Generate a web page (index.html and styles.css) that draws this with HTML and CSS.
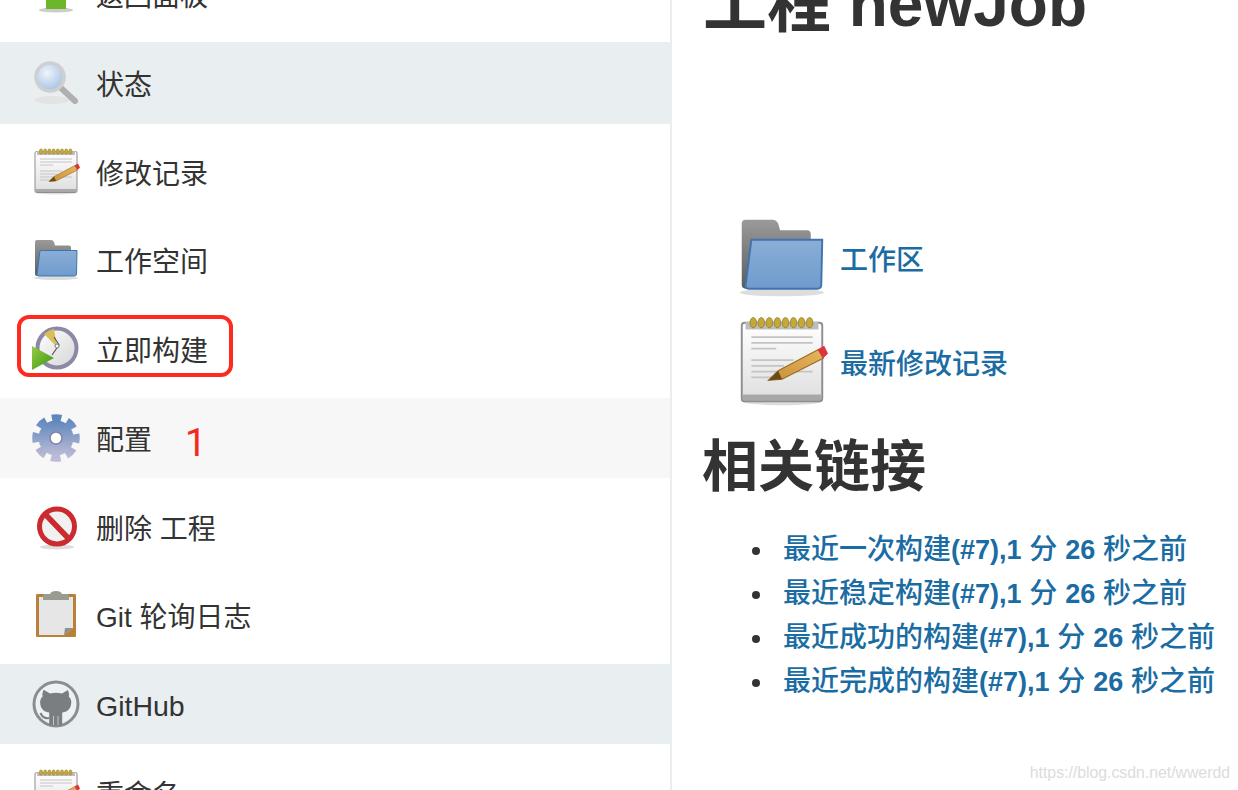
FILE: index.html
```html
<!DOCTYPE html>
<html lang="zh-CN">

<head>
  <meta charset="UTF-8">
  <title>工程 newJob</title>
  <link rel="stylesheet" href="styles.css">
</head>

<body>
  <svg class="defs" width="0" height="0">
    <defs>
      <linearGradient id="paper" x1="0" y1="0" x2="0" y2="1">
        <stop offset="0" stop-color="#ffffff" />
        <stop offset="1" stop-color="#dedede" />
      </linearGradient>
      <linearGradient id="pencil" x1="0" y1="1" x2="1" y2="0">
        <stop offset="0" stop-color="#c9913a" />
        <stop offset="1" stop-color="#e6b560" />
      </linearGradient>
      <linearGradient id="folderBack" x1="0" y1="0" x2="0" y2="1">
        <stop offset="0" stop-color="#9a9a9a" />
        <stop offset="1" stop-color="#5c5c5c" />
      </linearGradient>
      <linearGradient id="folderFront" x1="0" y1="0" x2="0" y2="1">
        <stop offset="0" stop-color="#8aaed6" />
        <stop offset="1" stop-color="#6f9bcd" />
      </linearGradient>
      <radialGradient id="lens" cx="0.4" cy="0.35" r="0.7">
        <stop offset="0" stop-color="#eef4fb" />
        <stop offset="1" stop-color="#a3c0e4" />
      </radialGradient>
      <linearGradient id="gear" x1="0" y1="0" x2="0" y2="1">
        <stop offset="0" stop-color="#5f86bd" />
        <stop offset="1" stop-color="#bcbcd6" />
      </linearGradient>
      <linearGradient id="play" x1="0" y1="0" x2="1" y2="1">
        <stop offset="0" stop-color="#97cc45" />
        <stop offset="1" stop-color="#3a9610" />
      </linearGradient>
      <linearGradient id="face" x1="0" y1="0" x2="1" y2="1">
        <stop offset="0" stop-color="#ffffff" />
        <stop offset="1" stop-color="#d5d5d5" />
      </linearGradient>

      <symbol id="i-up" viewBox="0 0 48 48">
        <ellipse cx="24" cy="40" rx="17" ry="2.5" fill="#ccc" />
        <path d="M24 2 44 22H34V39H14V22H4Z" fill="#6db52b" />
      </symbol>

      <symbol id="i-search" viewBox="0 0 48 48">
        <ellipse cx="20" cy="41" rx="17" ry="4" fill="#e2e4e4" />
        <path d="M29 29 43 42" stroke="#b0b0b0" stroke-width="6" stroke-linecap="round" />
        <circle cx="18" cy="18" r="14" fill="url(#lens)" stroke="#cfcfcf" stroke-width="3.5" />
      </symbol>

      <symbol id="i-notepad" viewBox="0 0 48 48">
        <ellipse cx="24" cy="45" rx="20" ry="1.5" fill="#ddd" />
        <rect x="3" y="3.500" width="42" height="41" rx="1.5" fill="url(#paper)" stroke="#8e8e8e" />
        <rect x="3.500" y="41" width="41" height="3" fill="#a8a8a8" />
        <rect x="5" y="3" width="38" height="4" fill="#bdbdbd" />
        <g fill="#c6a83a" stroke="#8d7a22" stroke-width=".4">
          <ellipse cx="9" cy="3.500" rx="1.7" ry="2.7" />
          <ellipse cx="13.200" cy="3.500" rx="1.7" ry="2.7" />
          <ellipse cx="17.400" cy="3.500" rx="1.7" ry="2.7" />
          <ellipse cx="21.600" cy="3.500" rx="1.7" ry="2.7" />
          <ellipse cx="25.800" cy="3.500" rx="1.7" ry="2.7" />
          <ellipse cx="30" cy="3.500" rx="1.7" ry="2.7" />
          <ellipse cx="34.200" cy="3.500" rx="1.7" ry="2.7" />
          <ellipse cx="38.400" cy="3.500" rx="1.7" ry="2.7" />
        </g>
        <path d="M8 11H40M8 14H40M8 17H21M8 23H30M8 26H25M8 29H40M8 32H20" stroke="#c4c4c4" stroke-width="1" />
        <path d="M17 33.500 22 28.500 43 17.500 45.500 22 24 33Z" fill="url(#pencil)" stroke="#9a6c22" stroke-width=".6" />
        <path d="M17 33.500 22 28.500 24 33Z" fill="#6a4a1a" />
        <path d="M42.500 17.500 46 15.500 48 19.500 45.500 22Z" fill="#e0323c" />
      </symbol>

      <symbol id="i-folder" viewBox="0 0 48 48">
        <ellipse cx="24" cy="42" rx="22" ry="2" fill="#ddd" />
        <path d="M3 6Q3 4 5 4H19Q21 4 22 6L23 9.500H37Q39 9.500 39 11.500V40H5Q3 40 3 38Z" fill="url(#folderBack)" />
        <path d="M8 14.500H45L44.500 38Q44.500 40 42.500 40H6.500Q5 40 5 38.500Z" fill="url(#folderFront)" stroke="#3f74b0" />
      </symbol>

      <symbol id="i-clock" viewBox="0 0 48 48">
        <circle cx="25" cy="23" r="19.500" fill="url(#face)" stroke="#8a8aa6" stroke-width="4" />
        <path d="M25 22 12 9Q17 5 22 4Z" fill="#d9bf58" />
        <path d="M22 12 27 20 20 30" fill="none" stroke="#555" stroke-width="1.200" />
        <circle cx="25" cy="21" r="2" fill="#fff" stroke="#777" />
        <path d="M0 21 22 33 0 45Z" fill="url(#play)" />
      </symbol>

      <symbol id="i-gear" viewBox="0 0 48 48">
        <circle cx="24" cy="24" r="20" fill="none" stroke="url(#gear)" stroke-width="7.500" stroke-dasharray="9.500 6.200" stroke-dashoffset="4.750" />
        <circle cx="24" cy="24" r="17.500" fill="url(#gear)" />
        <circle cx="24" cy="24" r="6" fill="#fff" stroke="#7f84a6" stroke-width="1.500" />
      </symbol>

      <symbol id="i-delete" viewBox="0 0 48 48">
        <ellipse cx="25" cy="44" rx="17" ry="2.500" fill="#ddd" />
        <circle cx="25" cy="23.500" r="17.500" fill="#f1f1f1" stroke="#cb2a2f" stroke-width="5" />
        <path d="M13 11 37 36" stroke="#cb2a2f" stroke-width="5.500" />
      </symbol>

      <symbol id="i-clipboard" viewBox="0 0 48 48">
        <rect x="4" y="3" width="40" height="43" rx="1" fill="#b9803a" />
        <path d="M7 6H41V37L32 44H7Z" fill="#e6e6e6" />
        <path d="M32 44 41 37H33Z" fill="#8f8f8f" />
        <path d="M11 9V5Q11 3 13 3H18Q19 0 24 0T30 3H35Q37 3 37 5V9Z" fill="#9a9b91" />
      </symbol>

      <symbol id="i-github" viewBox="0 0 48 48">
        <circle cx="24" cy="24" r="22" fill="#eef1f3" stroke="#8a8e91" stroke-width="3" />
        <path d="M12 10 18 13.500Q24 12 30 13.500L36 10Q37.500 14 36.800 16.500 39.800 19.500 39.200 23.500C38.600 30 34.200 32 30.200 32.500V45.500H17.200V32.500C13.200 32 8.800 30 8.200 23.500Q7.600 19.500 10.600 16.500 9.900 14 11.400 10Z" fill="#7b7e81" />
        <path d="M17 38Q11 39 8.500 33" fill="none" stroke="#7b7e81" stroke-width="2" />
        <path d="M21.500 36V45M26 36V45" stroke="#c4c7c9" stroke-width="1" />
      </symbol>
    </defs>
  </svg>

  <div class="page">
    <div class="sidebar">
      <div class="task-row">
        <svg class="task-icon"><use href="#i-up" /></svg>
        <span>返回面板</span>
      </div>
      <div class="task-row task-row-status">
        <svg class="task-icon"><use href="#i-search" /></svg>
        <span>状态</span>
      </div>
      <div class="task-row">
        <svg class="task-icon"><use href="#i-notepad" /></svg>
        <span>修改记录</span>
      </div>
      <div class="task-row">
        <svg class="task-icon"><use href="#i-folder" /></svg>
        <span>工作空间</span>
      </div>
      <div class="task-row">
        <svg class="task-icon"><use href="#i-clock" /></svg>
        <span>立即构建</span>
        <div class="red-box"></div>
      </div>
      <div class="task-row task-row-hover">
        <svg class="task-icon"><use href="#i-gear" /></svg>
        <span>配置</span>
        <span class="mark">1</span>
      </div>
      <div class="task-row">
        <svg class="task-icon"><use href="#i-delete" /></svg>
        <span>删除 工程</span>
      </div>
      <div class="task-row">
        <svg class="task-icon"><use href="#i-clipboard" /></svg>
        <span>Git 轮询日志</span>
      </div>
      <div class="task-row task-row-active">
        <svg class="task-icon"><use href="#i-github" /></svg>
        <span class="task-latin">GitHub</span>
      </div>
      <div class="task-row">
        <svg class="task-icon"><use href="#i-notepad" /></svg>
        <span>重命名</span>
      </div>
    </div>

    <div class="main">
      <h1>工程 newJob</h1>

      <div class="perma-links">
        <div class="perma-row">
          <svg class="perma-icon"><use href="#i-folder" /></svg>
          <a href="#">工作区</a>
        </div>
        <div class="perma-row">
          <svg class="perma-icon"><use href="#i-notepad" /></svg>
          <a href="#">最新修改记录</a>
        </div>
      </div>

      <h2>相关链接</h2>
      <ul class="build-links">
        <li><a href="#">最近一次构建<b>(#7),1</b> 分 <b>26</b> 秒之前</a></li>
        <li><a href="#">最近稳定构建<b>(#7),1</b> 分 <b>26</b> 秒之前</a></li>
        <li><a href="#">最近成功的构建<b>(#7),1</b> 分 <b>26</b> 秒之前</a></li>
        <li><a href="#">最近完成的构建<b>(#7),1</b> 分 <b>26</b> 秒之前</a></li>
      </ul>
    </div>
  </div>

  <div class="watermark">https://blog.csdn.net/wwerdd</div>
</body>

</html>
```

FILE: styles.css
```css
* {
  box-sizing: border-box;
}

html,
body {
  margin: 0;
  padding: 0;
  height: 790px;
  overflow: hidden;
  background: #fff;
}

body {
  position: relative;
  color: #333;
  font-family: "Liberation Sans", "Noto Sans CJK SC", sans-serif;
  font-size: 28px;
}

.defs {
  position: absolute;
}

.page {
  display: flex;
  align-items: flex-start;
}

.sidebar {
  flex: none;
  width: 672px;
  height: 836px;
  margin-top: -46px;
  display: flex;
  flex-direction: column;
  gap: 8.75px;
  border-right: 2px solid #e9eef1;
}

.task-row {
  position: relative;
  flex: none;
  height: 80px;
  padding-left: 32px;
  display: flex;
  align-items: center;
  gap: 16px;
}

.task-row-status {
  height: 82px;
  margin: -1px 0;
  background: #e9eef1;
}

.task-row-active {
  background: #e9eef1;
}

.task-row-hover {
  background: #f7f7f7;
}

.task-latin {
  margin-top: 5px;
  font-size: 28.500px;
}

.task-icon {
  flex: none;
  width: 48px;
  height: 48px;
  filter: blur(0.7px);
}

.red-box {
  position: absolute;
  left: 17px;
  top: 6px;
  width: 216px;
  height: 62px;
  border: 4px solid #ff2a1f;
  border-radius: 12px;
}

.mark {
  margin: 10px 0 0 17px;
  color: #f5281e;
  font-family: Roboto, sans-serif;
  font-size: 38px;
}

.main {
  flex: 1;
  min-width: 0;
  margin-top: -34px;
  padding-left: 32px;
}

h1 {
  margin: 0 0 0 -1px;
  font-size: 64px;
  line-height: 1.2;
  font-weight: bold;
}

h2 {
  margin: 25px 0 0 -2px;
  font-size: 56px;
  line-height: 1.2;
  font-weight: bold;
}

a {
  color: #1a6ca3;
  font-weight: 500;
  text-decoration: none;
}

a b {
  font-size: 27px;
}

.perma-links {
  margin-top: 169px;
  padding-left: 32px;
  display: flex;
  flex-direction: column;
  gap: 12px;
}

.perma-row {
  display: flex;
  align-items: center;
  gap: 12px;
}

.perma-icon {
  flex: none;
  width: 92px;
  height: 92px;
  filter: blur(0.7px);
}

.build-links {
  margin: 28px 0 0;
  padding: 0 0 0 48px;
  list-style: none;
}

.build-links li {
  height: 44px;
  line-height: 44px;
  display: flex;
  align-items: center;
  gap: 23px;
  white-space: nowrap;
}

.build-links li::before {
  content: "";
  flex: none;
  width: 8px;
  height: 8px;
  margin-top: 3px;
  border-radius: 50%;
  background: #333;
}

.watermark {
  position: absolute;
  right: 8px;
  bottom: 8px;
  color: #dcdcdc;
  font-size: 15.800px;
}
```
